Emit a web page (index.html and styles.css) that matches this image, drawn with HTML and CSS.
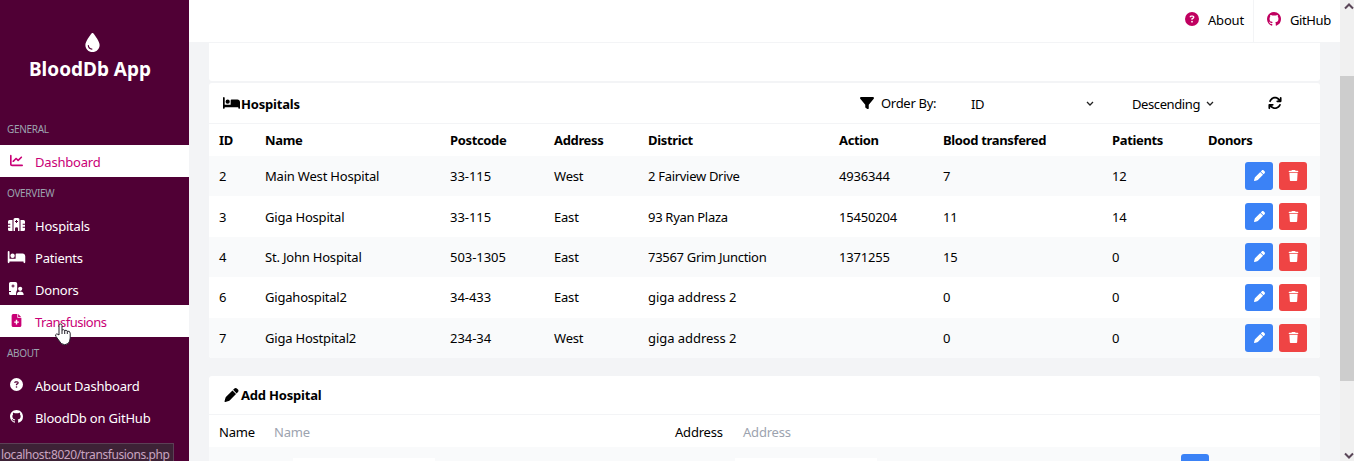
FILE: index.html
```html
<!DOCTYPE html>
<html lang="en">
<head>
<meta charset="utf-8">
<title>BloodDb App</title>
<link rel="stylesheet" href="styles.css">
</head>
<body>
<svg class="defs" width="0" height="0">
<symbol id="drop" viewBox="0 0 384 512"><path d="M192 512C86 512 0 426 0 320C0 228.800 130.200 57.700 166.600 11.700C172.600 4.200 181.500 0 191.100 0h1.800c9.600 0 18.500 4.200 24.500 11.700C253.800 57.700 384 228.800 384 320c0 106-86 192-192 192zM96 336c0-8.800-7.200-16-16-16s-16 7.200-16 16c0 61.900 50.100 112 112 112c8.800 0 16-7.200 16-16s-7.200-16-16-16c-44.200 0-80-35.800-80-80z"/></symbol>
<symbol id="bed" viewBox="0 0 640 512"><path d="M32 32c17.700 0 32 14.300 32 32V320H288V160c0-17.700 14.300-32 32-32H544c53 0 96 43 96 96V448c0 17.700-14.300 32-32 32s-32-14.300-32-32V416H64v32c0 17.700-14.300 32-32 32s-32-14.300-32-32V64C0 46.300 14.300 32 32 32zm144 96a80 80 0 1 1 0 160 80 80 0 1 1 0-160z"/></symbol>
<symbol id="chart" viewBox="0 0 512 512"><path d="M64 64c0-17.700-14.300-32-32-32S0 46.300 0 64V400c0 44.200 35.800 80 80 80H480c17.700 0 32-14.300 32-32s-14.300-32-32-32H80c-8.800 0-16-7.200-16-16V64zm406.600 86.600c12.500-12.500 12.500-32.800 0-45.300s-32.800-12.500-45.300 0L320 210.700l-57.400-57.400c-12.500-12.500-32.800-12.500-45.300 0l-112 112c-12.500 12.500-12.500 32.800 0 45.300s32.800 12.500 45.300 0L240 221.300l57.400 57.400c12.500 12.500 32.800 12.500 45.300 0l128-128z"/></symbol>
<symbol id="question" viewBox="0 0 512 512"><path fill-rule="evenodd" d="M256 512A256 256 0 1 0 256 0a256 256 0 1 0 0 512zM169.800 165.300c7.900-22.300 29.100-37.300 52.800-37.300h58.300c34.900 0 63.100 28.300 63.100 63.100c0 22.600-12.100 43.500-31.700 54.800L280 264.400c-.2 13-10.900 23.600-24 23.600c-13.300 0-24-10.700-24-24V250.500c0-8.600 4.600-16.500 12.100-20.800l44.300-25.400c4.700-2.700 7.600-7.700 7.600-13.100c0-8.400-6.800-15.100-15.100-15.100H222.600c-3.400 0-6.400 2.100-7.500 5.300l-.4 1.200c-4.400 12.500-18.200 19-30.600 14.600s-19-18.200-14.600-30.600l.4-1.200zM224 352a32 32 0 1 1 64 0 32 32 0 1 1-64 0z"/></symbol>
<symbol id="github" viewBox="0 0 16 16"><path d="M8 0C3.580 0 0 3.580 0 8c0 3.540 2.290 6.530 5.470 7.590.4.070.55-.17.55-.38 0-.19-.01-.82-.01-1.490-2.010.37-2.530-.49-2.690-.94-.09-.23-.48-.94-.82-1.130-.28-.15-.68-.52-.01-.53.63-.01 1.080.58 1.230.82.72 1.210 1.870.87 2.330.66.07-.52.28-.87.51-1.070-1.780-.2-3.640-.89-3.640-3.950 0-.87.31-1.590.82-2.150-.08-.2-.36-1.020.08-2.120 0 0 .67-.21 2.200.82.64-.18 1.320-.27 2-.27s1.360.09 2 .27c1.530-1.040 2.200-.82 2.200-.82.44 1.100.16 1.920.08 2.120.51.56.82 1.270.82 2.150 0 3.070-1.870 3.750-3.650 3.950.29.25.54.73.54 1.480 0 1.070-.01 1.930-.01 2.200 0 .21.15.46.55.38A8.010 8.010 0 0 0 16 8c0-4.420-3.580-8-8-8z"/></symbol>
<symbol id="filter" viewBox="0 0 512 512"><path d="M3.900 54.900C10.500 40.900 24.500 32 40 32H472c15.500 0 29.500 8.900 36.100 22.900s4.600 30.500-5.200 42.500L320 320.900V448c0 12.100-6.800 23.200-17.700 28.600s-23.800 4.300-33.500-3l-64-48c-8.100-6-12.800-15.500-12.800-25.600V320.900L9 97.300C-.7 85.400-2.800 68.800 3.900 54.900z"/></symbol>
<symbol id="pen" viewBox="0 0 512 512"><path d="M362.700 19.300L314.300 67.700 444.300 197.700l48.400-48.400c25-25 25-65.500 0-90.500L453.300 19.300c-25-25-65.500-25-90.500 0zm-71 71L58.600 323.100c-10.400 10.400-18 23.300-22.200 37.400L1 481.200C-1.500 489.700.8 498.800 7 505s15.300 8.500 23.700 6.100l120.300-35.400c14.100-4.200 27-11.800 37.400-22.200L421.700 220.300 291.700 90.300z"/></symbol>
<symbol id="trash" viewBox="0 0 448 512"><path d="M135.200 17.700L128 32H32C14.300 32 0 46.300 0 64S14.300 96 32 96H416c17.700 0 32-14.300 32-32s-14.300-32-32-32H320l-7.200-14.300C307.400 6.800 296.300 0 284.200 0H163.800c-12.100 0-23.200 6.800-28.600 17.700zM416 128H32L53.200 467c1.600 25.300 22.600 45 47.900 45H346.900c25.300 0 46.300-19.700 47.900-45L416 128z"/></symbol>
<symbol id="rotate" viewBox="0 0 512 512"><path d="M105.100 202.600c7.700-21.800 20.200-42.300 37.800-59.800c62.500-62.500 163.800-62.500 226.300 0L386.300 160H336c-17.700 0-32 14.300-32 32s14.300 32 32 32H463.500c17.700 0 32-14.300 32-32V64c0-17.700-14.300-32-32-32s-32 14.300-32 32v51.200L414.400 97.600c-87.500-87.500-229.300-87.500-316.800 0C73.200 122 55.600 150.700 44.800 181.400c-5.900 16.700 2.900 34.900 19.500 40.800s34.900-2.900 40.800-19.500zM48.400 288c-17.700 0-32.400 14.300-32.400 32V448c0 17.700 14.300 32 32 32s32-14.300 32-32V396.900l17.600 17.500c87.500 87.400 229.300 87.400 316.700 0c24.400-24.400 42.100-53.100 52.900-83.700c5.900-16.700-2.900-34.900-19.500-40.800s-34.900 2.900-40.800 19.500c-7.700 21.800-20.200 42.300-37.800 59.800c-62.500 62.500-163.800 62.500-226.300 0L125.600 352H176c17.700 0 32-14.300 32-32s-14.300-32-32-32z"/></symbol>
<symbol id="hospital" viewBox="0 0 17 14"><path fill-rule="evenodd" d="M5.500 1.500Q5.500 0 7 0h3q1.500 0 1.500 1.500V13H10v-2.500q0-1.300-1.500-1.300T7 10.500V13H5.500zM8 2v1H7v1h1v1h1V4h1V3H9V2zM1.500 2h3v11h-3Q0 13 0 11.500V9.800h2.300V8.700H0V6.800h2.300V5.700H0V3.500Q0 2 1.500 2zM12.500 2h3Q17 2 17 3.500v2.200h-2.300v1.100H17v1.900h-2.300v1.100H17v1.700q0 1.500-1.500 1.500h-3z"/></symbol>
<symbol id="donor" viewBox="0 0 16 14"><path fill-rule="evenodd" d="M2 0h5q1.700 0 1.700 1.700v6Q7.500 9 7.500 13H2Q.5 13 .5 11.500V10h2V9h-2V1.500Q.5 0 2 0zM4 2.500v1H3v1h1v1h1v-1h1v-1H5v-1z"/><circle cx="11.700" cy="6.800" r="2.100"/><path d="M8.300 13c0-2.500 1.500-3.500 3.400-3.500s3.500 1 3.500 3.500z"/></symbol>
<symbol id="file" viewBox="0 0 384 512"><path fill-rule="evenodd" d="M64 0h160v128q0 32 32 32h128v288q0 64-64 64H64q-64 0-64-64V64Q0 0 64 0zM256 0l128 128H256zM164 230v62h-62v56h62v62h56v-62h62v-56h-62v-62z"/></symbol>
</svg>
<div class="app">
<aside class="sidebar">
<header class="brand"><svg class="brand-icon"><use href="#drop"/></svg><h1>BloodDb App</h1></header>
<nav>
<h2>GENERAL</h2>
<a class="active"><svg><use href="#chart"/></svg><span>Dashboard</span></a>
<h2>OVERVIEW</h2>
<a><svg class="wide"><use href="#hospital"/></svg><span>Hospitals</span></a>
<a><svg class="wide"><use href="#bed"/></svg><span>Patients</span></a>
<a><svg class="wide"><use href="#donor"/></svg><span>Donors</span></a>
<a class="active tight"><svg><use href="#file"/></svg><span>Transfusions</span></a>
<h2>ABOUT</h2>
<a><svg><use href="#question"/></svg><span>About Dashboard</span></a>
<a><svg><use href="#github"/></svg><span>BloodDb on GitHub</span></a>
</nav>
</aside>
<div class="main">
<header class="topbar">
<a><svg><use href="#question"/></svg><span>About</span></a>
<a class="gh"><svg><use href="#github"/></svg><span>GitHub</span></a>
</header>
<main>
<section class="card blank"></section>
<section class="card hospitals">
<div class="card-head"><svg class="bed"><use href="#bed"/></svg><h3>Hospitals</h3>
<div class="order"><svg><use href="#filter"/></svg><span class="order-label">Order By:</span><span class="select id">ID<svg viewBox="0 0 8 6"><path d="M1 1l3 3 3-3"/></svg></span><span class="select">Descending<svg viewBox="0 0 8 6"><path d="M1 1l3 3 3-3"/></svg></span><svg class="refresh"><use href="#rotate"/></svg></div></div>
<div class="row th"><span>ID</span><span>Name</span><span>Postcode</span><span>Address</span><span>District</span><span>Action</span><span>Blood transfered</span><span>Patients</span><span>Donors</span></div>
<div class="row"><span>2</span><span>Main West Hospital</span><span>33-115</span><span>West</span><span>2 Fairview Drive</span><span>4936344</span><span>7</span><span>12</span><div class="actions"><b><svg><use href="#pen"/></svg></b><b class="del"><svg><use href="#trash"/></svg></b></div></div>
<div class="row"><span>3</span><span>Giga Hospital</span><span>33-115</span><span>East</span><span>93 Ryan Plaza</span><span>15450204</span><span>11</span><span>14</span><div class="actions"><b><svg><use href="#pen"/></svg></b><b class="del"><svg><use href="#trash"/></svg></b></div></div>
<div class="row"><span>4</span><span>St. John Hospital</span><span>503-1305</span><span>East</span><span>73567 Grim Junction</span><span>1371255</span><span>15</span><span>0</span><div class="actions"><b><svg><use href="#pen"/></svg></b><b class="del"><svg><use href="#trash"/></svg></b></div></div>
<div class="row"><span>6</span><span>Gigahospital2</span><span>34-433</span><span>East</span><span class="loose">giga address 2</span><span></span><span>0</span><span>0</span><div class="actions"><b><svg><use href="#pen"/></svg></b><b class="del"><svg><use href="#trash"/></svg></b></div></div>
<div class="row"><span>7</span><span>Giga Hostpital2</span><span>234-34</span><span>West</span><span class="loose">giga address 2</span><span></span><span>0</span><span>0</span><div class="actions"><b><svg><use href="#pen"/></svg></b><b class="del"><svg><use href="#trash"/></svg></b></div></div>
</section>
<section class="card add">
<div class="card-head"><svg class="pen"><use href="#pen"/></svg><h3>Add Hospital</h3></div>
<div class="form"><label>Name</label><span class="ph">Name</span><label>Address</label><span class="ph">Address</span></div>
<div class="form-next"><i class="field"></i><i class="field"></i><i class="submit"></i></div>
</section>
</main>
</div>
<div class="scrollbar"><svg viewBox="0 0 10 7"><path d="M1 5.500l4-4 4 4"/></svg><div class="thumb"></div><svg viewBox="0 0 10 7"><path d="M1 1.500l4 4 4-4"/></svg></div>
</div>
<div class="status">localhost:8020/transfusions.php</div>
<svg class="cursor" viewBox="0 0 18 23"><path d="M5 12V2.500a1.500 1.500 0 0 1 3 0V7q1.500-1 2.700.5 1.600-.8 2.600.7 2.700-.6 2.900 2V15q-.2 3.500-2 5.500-3.500 2.500-7 0L2 13.500q-1.300-2 .5-2.500Q4 11 5 12z"/><path d="M8 7v4M10.700 7.500V11M13.300 8.200V11"/></svg>
</body>
</html>
```
FILE: styles.css
```css
* { box-sizing: border-box; }
body { margin: 0; height: 461px; overflow: hidden; font: 13px/20px "Noto Sans", "Open Sans", sans-serif; letter-spacing: -0.2px; color: #000; }
svg { fill: currentColor; flex: none; }
.defs { position: absolute; }
h1, h2, h3 { margin: 0; }
.app { display: flex; height: 461px; }
.sidebar { width: 189px; background: #500035; color: #fff; flex: none; }
.brand { height: 113px; padding-top: 33px; display: flex; flex-direction: column; align-items: center; }
.brand-icon { width: 15px; height: 19px; margin-left: -4px; }
.brand h1 { font-size: 19px; line-height: 24px; letter-spacing: 0; margin: 5px 9px 0 0; white-space: nowrap; }
nav h2 { height: 32px; padding-left: 7px; font-size: 10px; font-weight: 400; line-height: 33px; letter-spacing: -0.3px; color: #9ca3af; }
nav a { display: flex; align-items: center; height: 32px; white-space: nowrap; }
nav a svg { width: 33px; height: 13px; margin-top: -1px; }
nav a svg.wide { height: 14px; }
nav a span { padding: 2px 0 0 2px; }
nav a.active { background: #fff; color: #c90076; }
nav a.tight { letter-spacing: -0.5px; }
.main { flex: 1; background: #f3f4f6; }
.topbar { height: 43px; background: #fff; border-bottom: 1px solid #f3f4f6; display: flex; justify-content: flex-end; }
.topbar a { display: flex; align-items: center; width: 80px; padding: 0 0 2px 12px; }
.topbar a.gh { width: 87px; border-left: 1px solid #f3f4f6; padding-left: 13px; letter-spacing: -0.4px; }
.topbar svg { width: 14px; height: 14px; color: #c00060; margin-right: 9px; margin-top: -2px; }
main { padding: 0 20px; width: 1151px; }
.card { background: #fff; border-radius: 3px; width: 1111px; overflow: hidden; }
.blank { height: 38px; border-radius: 0 0 3px 3px; }
.hospitals { margin-top: 2px; }
.card-head { display: flex; align-items: center; height: 41px; padding-left: 14px; border-bottom: 1px solid #f3f4f6; }
.card-head h3 { font-size: 13px; padding-top: 1px; }
.bed { width: 17px; height: 14px; margin-right: 1px; }
.order { display: flex; align-items: center; margin-left: auto; width: 460px; }
.order > svg { width: 14px; height: 14px; }
.order-label { width: 97px; padding-left: 7px; letter-spacing: -0.3px; }
.select { display: flex; align-items: center; width: 82px; justify-content: space-between; padding-top: 1px; white-space: nowrap; letter-spacing: -0.4px; }
.select.id { width: 123px; margin-right: 38px; }
.select svg { width: 8px; height: 6px; fill: none; stroke: #222; stroke-width: 1.300; }
.order .refresh { margin-left: 54px; }
.row { display: grid; grid-template-columns: 46px 185px 104px 94px 191px 104px 169px 96px 122px; align-items: center; height: 40.400px; }
.row > span { padding-left: 10px; white-space: nowrap; }
.row > span:nth-child(3), .row > .loose { letter-spacing: -0.05px; }
.row > span:nth-child(5):not(.loose) { letter-spacing: -0.3px; }
.row:nth-child(odd) { background: #f9fafb; }
.row.th { height: 32px; font-weight: 700; background: #fff; }
.row.th > span:nth-child(n) { letter-spacing: -0.35px; }
.actions { display: flex; justify-content: flex-end; gap: 6px; padding-right: 13px; }
.actions b { width: 28px; height: 27.500px; border-radius: 3px; background: #3b82f6; color: #fff; display: flex; align-items: center; justify-content: center; padding-bottom: 1px; }
.actions .del { background: #ef4444; }
.actions svg { width: 11px; height: 11px; }
.add { margin-top: 18px; height: 100px; }
.add .card-head { height: 39px; }
.pen { width: 17px; height: 14px; margin-right: 1px; }
.form { display: grid; grid-template-columns: 55px 401px 68px 1fr; height: 32px; align-items: center; padding: 3px 10px 0; }
.ph { color: #9ca3af; }
.form-next { height: 40px; background: #f9fafb; display: flex; align-items: flex-start; padding-left: 84px; }
.field { width: 142px; height: 28px; background: #fff; margin-top: 11px; margin-right: 300px; }
.submit { width: 28px; height: 28px; background: #3b82f6; border-radius: 3px; margin: 7px 0 0 4px; }
.scrollbar { width: 14px; background: #f0f0f0; display: flex; flex-direction: column; align-items: center; padding: 3px 0 2px 3px; flex: none; }
.scrollbar svg { width: 10px; height: 7px; fill: none; stroke: #5a4658; stroke-width: 2; }
.thumb { width: 14px; height: 305px; background: #cdcdcd; margin: 66px 0 auto -3px; flex: none; }
.status { position: absolute; left: 0; bottom: 0; width: 174px; height: 18px; border: 1px solid #5c4056; border-width: 1px 1px 0 0; background: #3d2236; color: #c9a4c0; font-size: 12px; letter-spacing: -0.4px; line-height: 22px; padding-left: 1px; white-space: nowrap; }
.cursor { position: absolute; left: 54px; top: 323px; width: 18px; height: 23px; fill: #fff; stroke: #25202a; stroke-width: 1; }
```
